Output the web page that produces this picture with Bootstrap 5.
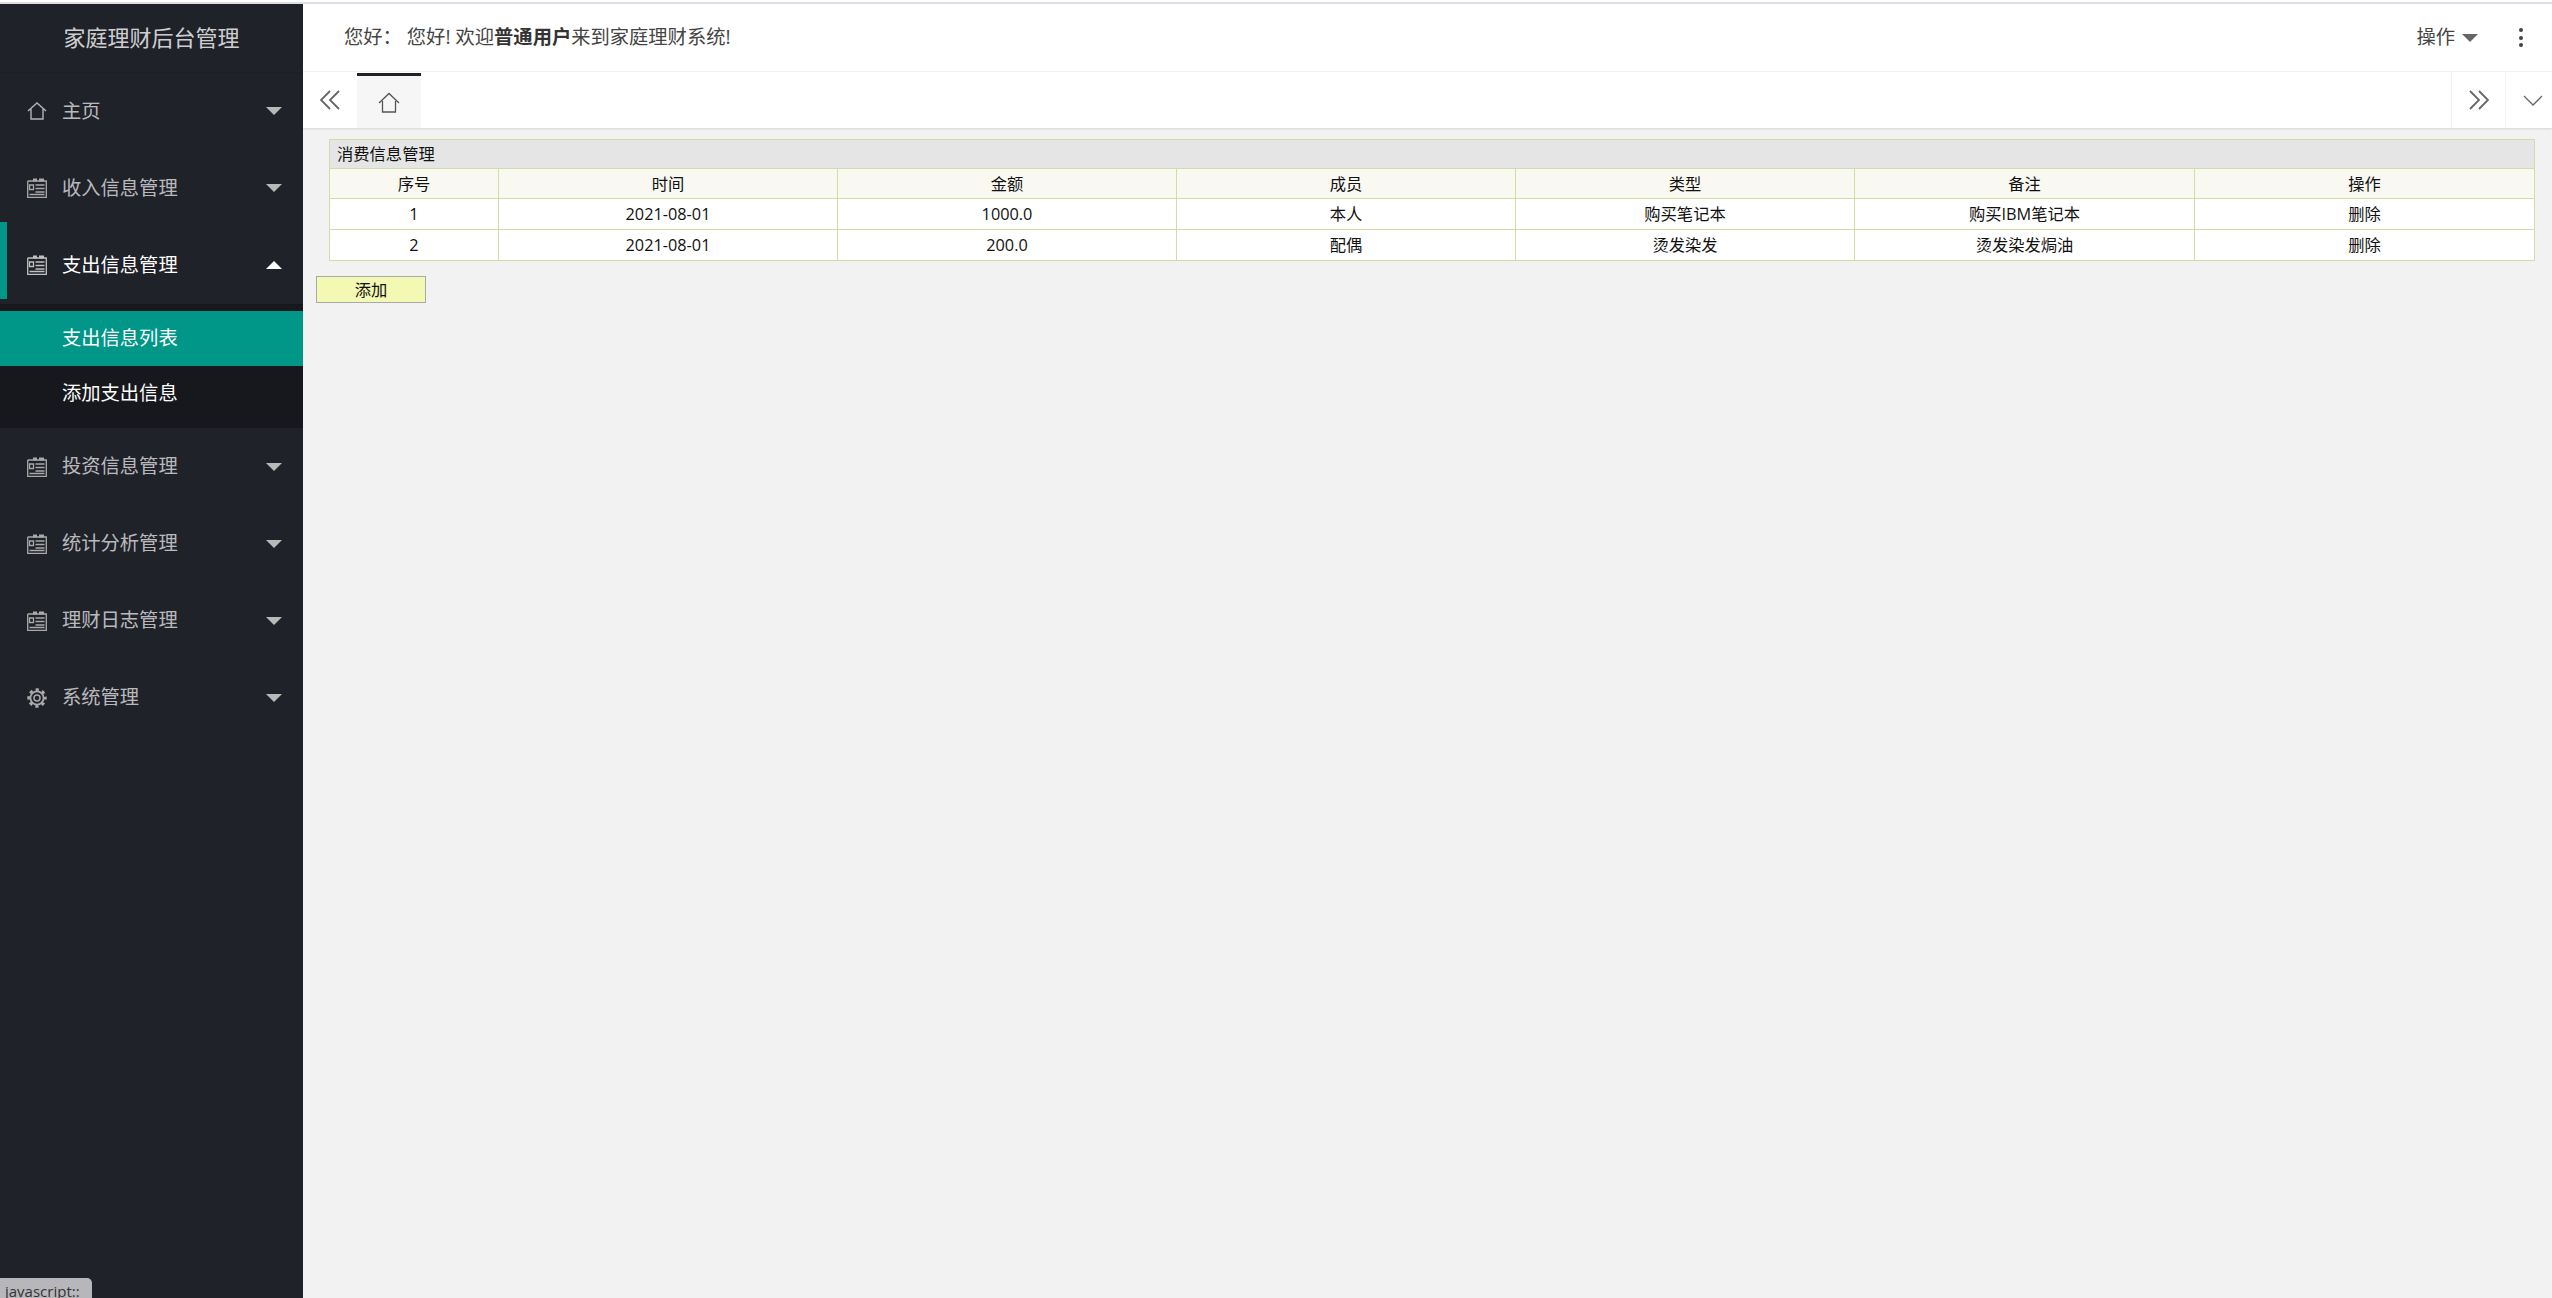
<!DOCTYPE html>
<html lang="zh-CN">
<head>
<meta charset="utf-8">
<title>家庭理财后台管理</title>
<link href="https://cdn.jsdelivr.net/npm/bootstrap@5.3.0/dist/css/bootstrap.min.css" rel="stylesheet">
<style>
html,body{height:100%;overflow:hidden}
body{background:#fff;font-family:"Open Sans","Noto Sans CJK SC",sans-serif;color:#333;position:relative}
.top-strip{height:4px;border-top:2px solid #fff;background:#dddde6}
.shell{height:calc(100vh - 4px)}
.side{width:303px;background:#20222a;flex:none}
.side-logo{height:68.5px;color:rgba(255,255,255,.8);font-size:22px;line-height:66px;text-align:center;border-bottom:1px solid #1d1f26}
.side-item{height:77px;padding:0 21px 0 27px;color:rgba(255,255,255,.7);font-size:19.3px;position:relative}
.side-item svg.ic{width:20px;height:20px;margin-right:15px;flex:none}
.side-item.open{color:#fff}
.side-item.open::before{content:"";position:absolute;left:0;top:-5px;width:7px;height:77px;background:#009688}
.arrow-d{width:0;height:0;border:8.5px solid transparent;border-top-color:#b9b9b9;border-bottom:0;margin-left:auto}
.arrow-u{width:0;height:0;border:8.5px solid transparent;border-bottom-color:#fff;border-top:0;margin-left:auto}
.sub-menu{background:#17181d;padding:7px 0;height:124px;margin-top:.5px}
.sub-item{height:55px;line-height:53px;padding-left:62px;color:#fff;font-size:19.3px}
.sub-item.on{background:#009688}
.main-col{min-width:0;background:#f2f2f2}
.head-bar{height:68px;background:#fff;padding:0 29px 0 41px;font-size:19.3px;color:#444;border-bottom:1px solid #f3f3f3}
.head-bar b{color:#333;font-weight:700}
.gap-hello{margin-right:5px}
.ops-caret{width:0;height:0;border:8.5px solid transparent;border-top-color:#666;border-bottom:0;margin:0 0 0 7px}
.kebab{margin-left:41px;width:4px;display:flex;flex-direction:column;gap:3.5px}
.kebab i{display:block;width:4px;height:4px;border-radius:50%;background:#444}
.tab-bar{height:56px;background:#fff;box-shadow:0 1px 2px rgba(0,0,0,.12)}
.prev-btn{width:54px;padding-left:17px}
.tab-home{width:64px;margin-top:1px;height:55px;background:#f6f6f6;border-top:3px solid #20222a}
.tab-end{height:56px;border-left:1px solid #f1f1f1}
.tab-next{width:54px}
.tab-more{width:47px;padding-left:8px}
.page-pane{padding:11px 16px 0 13px}
.data-grid{width:2205px;margin-left:13px;table-layout:fixed;border-collapse:collapse;font-size:16.3px;color:#111;background:#fff}
.data-grid th,.data-grid td{border:1.3px solid #d3dca8;padding:0;text-align:center;font-weight:400;height:31px;line-height:30px}
.data-grid .grid-title{background:#e5e5e5;text-align:left;padding-left:7px;height:29px;line-height:28px}
.data-grid .grid-title span{display:block}
.data-grid .grid-head th{background:#f9f9f2;height:30px;line-height:28px}
.add-btn{display:block;margin-top:15px;width:110px;height:27px;background:#f3f8b3;border:1.3px solid #a9a9a9;font-size:16.3px;color:#111;padding:0;line-height:24px}
.status-tip{position:absolute;left:0;bottom:0;width:92px;height:20px;background:#b7b7bb;border-top-right-radius:5px;color:#333;font-size:15px;padding-left:5px;line-height:26px;overflow:hidden}
</style>
</head>
<body>
<div class="top-strip"></div>
<div class="shell d-flex">
  <aside class="side">
    <div class="side-logo">家庭理财后台管理</div>
    <div class="side-item d-flex align-items-center"><svg class="ic" viewBox="0 0 20 20" fill="none" stroke="#b5b5b5" stroke-width="1.4"><path d="M1 10 10 2l9 8M4 8v10h12V8"/></svg>主页<span class="arrow-d"></span></div>
    <div class="side-item d-flex align-items-center"><svg class="ic" viewBox="0 0 20 20" fill="none" stroke="#a9a9a9" stroke-width="1.3"><path d="M.7 3v16.300h18.600V3H.7"/><path d="M6 2h4M12 2h5" stroke-width="3"/><path d="M2.500 7h4v4.500h-4zM8.500 7h9M8.500 10.500h9M8.500 14h9M2.500 16.500h15"/></svg>收入信息管理<span class="arrow-d"></span></div>
    <div class="side-item open d-flex align-items-center"><svg class="ic" viewBox="0 0 20 20" fill="none" stroke="#c0c0c0" stroke-width="1.3"><path d="M.7 3v16.300h18.600V3H.7"/><path d="M6 2h4M12 2h5" stroke-width="3"/><path d="M2.500 7h4v4.500h-4zM8.500 7h9M8.500 10.500h9M8.500 14h9M2.500 16.500h15"/></svg>支出信息管理<span class="arrow-u"></span></div>
    <div class="sub-menu">
      <div class="sub-item on">支出信息列表</div>
      <div class="sub-item">添加支出信息</div>
    </div>
    <div class="side-item d-flex align-items-center"><svg class="ic" viewBox="0 0 20 20" fill="none" stroke="#a9a9a9" stroke-width="1.3"><path d="M.7 3v16.300h18.600V3H.7"/><path d="M6 2h4M12 2h5" stroke-width="3"/><path d="M2.500 7h4v4.500h-4zM8.500 7h9M8.500 10.500h9M8.500 14h9M2.500 16.500h15"/></svg>投资信息管理<span class="arrow-d"></span></div>
    <div class="side-item d-flex align-items-center"><svg class="ic" viewBox="0 0 20 20" fill="none" stroke="#a9a9a9" stroke-width="1.3"><path d="M.7 3v16.300h18.600V3H.7"/><path d="M6 2h4M12 2h5" stroke-width="3"/><path d="M2.500 7h4v4.500h-4zM8.500 7h9M8.500 10.500h9M8.500 14h9M2.500 16.500h15"/></svg>统计分析管理<span class="arrow-d"></span></div>
    <div class="side-item d-flex align-items-center"><svg class="ic" viewBox="0 0 20 20" fill="none" stroke="#a9a9a9" stroke-width="1.3"><path d="M.7 3v16.300h18.600V3H.7"/><path d="M6 2h4M12 2h5" stroke-width="3"/><path d="M2.500 7h4v4.500h-4zM8.500 7h9M8.500 10.500h9M8.500 14h9M2.500 16.500h15"/></svg>理财日志管理<span class="arrow-d"></span></div>
    <div class="side-item d-flex align-items-center"><svg class="ic" viewBox="0 0 20 20" fill="none" stroke="#a9a9a9"><circle cx="10" cy="10" r="3" stroke-width="1.5"/><circle cx="10" cy="10" r="6.600" stroke-width="1.8"/><circle cx="10" cy="10" r="8.200" stroke-width="3" stroke-dasharray="3.200 3.240" stroke-dashoffset="1.600"/></svg>系统管理<span class="arrow-d"></span></div>
  </aside>
  <main class="main-col flex-grow-1">
    <header class="head-bar d-flex align-items-center">
      <span class="gap-hello">您好：</span><span>您好! 欢迎<b>普通用户</b>来到家庭理财系统!</span>
      <span class="ms-auto">操作</span><span class="ops-caret"></span>
      <span class="kebab"><i></i><i></i><i></i></span>
    </header>
    <div class="tab-bar d-flex align-items-center">
      <div class="prev-btn d-flex align-items-center"><svg width="20" height="20" viewBox="0 0 20 20" fill="none" stroke="#666" stroke-width="1.8"><path d="M10 1 1 10l9 9M19 1l-9 9 9 9"/></svg></div>
      <div class="tab-home d-flex align-items-center justify-content-center"><svg width="22" height="21" viewBox="0 0 22 21" fill="none" stroke="#555" stroke-width="1.3"><path d="M1 11 11 1.500 21 11M4.500 9v11h13V9"/></svg></div>
      <div class="tab-end tab-next ms-auto d-flex align-items-center justify-content-center"><svg width="20" height="20" viewBox="0 0 20 20" fill="none" stroke="#666" stroke-width="1.8"><path d="M1 1l9 9-9 9M10 1l9 9-9 9"/></svg></div>
      <div class="tab-end tab-more d-flex align-items-center justify-content-center"><svg width="20" height="11" viewBox="0 0 20 11" fill="none" stroke="#666" stroke-width="1.3"><path d="M1 1l9 9 9-9"/></svg></div>
    </div>
    <div class="page-pane">
      <table class="data-grid">
        <colgroup><col style="width:169px"><col style="width:339px"><col style="width:339px"><col style="width:339px"><col style="width:339px"><col style="width:340px"><col style="width:340px"></colgroup>
        <tr><th colspan="7" class="grid-title"><span>消费信息管理</span></th></tr>
        <tr class="grid-head"><th>序号</th><th>时间</th><th>金额</th><th>成员</th><th>类型</th><th>备注</th><th>操作</th></tr>
        <tr><td>1</td><td>2021-08-01</td><td>1000.0</td><td>本人</td><td>购买笔记本</td><td>购买IBM笔记本</td><td>删除</td></tr>
        <tr><td>2</td><td>2021-08-01</td><td>200.0</td><td>配偶</td><td>烫发染发</td><td>烫发染发焗油</td><td>删除</td></tr>
      </table>
      <button type="button" class="add-btn">添加</button>
    </div>
  </main>
</div>
<div class="status-tip">javascript::</div>
<script src="https://cdn.jsdelivr.net/npm/bootstrap@5.3.0/dist/js/bootstrap.bundle.min.js"></script>
</body>
</html>
